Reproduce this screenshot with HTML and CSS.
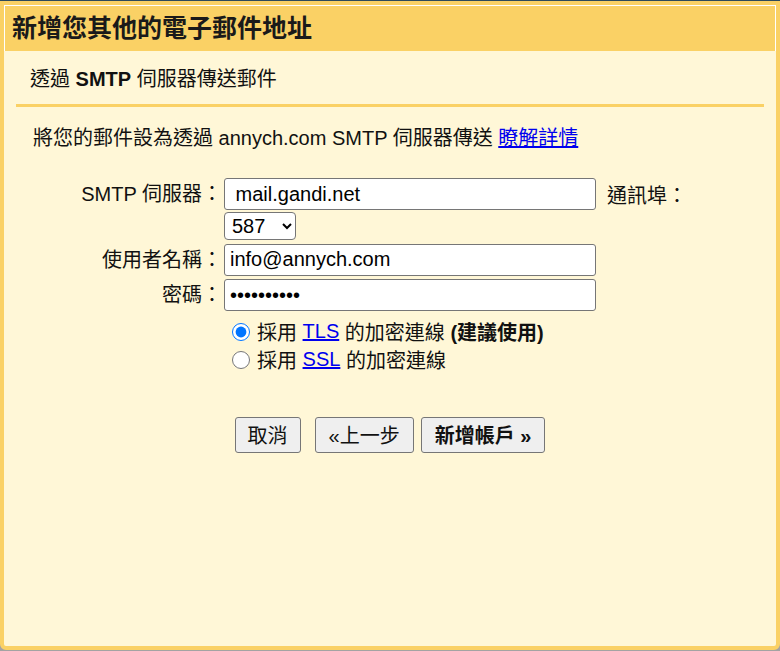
FILE: index.html
```
<!DOCTYPE html>
<html lang="zh-Hant">
<head>
    <meta charset="UTF-8">
    <meta name="viewport" content="width=device-width, initial-scale=1.0">
    <title>新增您其他的電子郵件地址</title>
    <link rel="stylesheet" href="styles.css">
</head>
<body>
<div class="dialog">
    <div class="dialog-head">新增您其他的電子郵件地址</div>

    <div class="section">
        <div class="section-title">透過 <b>SMTP</b> 伺服器傳送郵件</div>

        <p class="intro">將您的郵件設為透過 annych.com SMTP 伺服器傳送 <a href="#">瞭解詳情</a></p>

        <div class="form">
            <label class="field-label" for="smtpServer">SMTP 伺服器：</label>
            <div class="field">
                <div class="field-line">
                    <input id="smtpServer" class="text-input" type="text" value=" mail.gandi.net">
                    <span class="port-label">通訊埠：</span>
                </div>
                <select class="port-select">
                    <option selected>587</option>
                    <option>465</option>
                    <option>25</option>
                </select>
            </div>

            <label class="field-label" for="userName">使用者名稱：</label>
            <div class="field">
                <input id="userName" class="text-input" type="text" value="info@annych.com">
            </div>

            <label class="field-label" for="password">密碼：</label>
            <div class="field">
                <input id="password" class="text-input" type="password" value="0123456789">
            </div>

            <div></div>
            <div class="options">
                <label class="option"><input type="radio" name="security" checked>採用&nbsp;<a href="#">TLS</a>&nbsp;的加密連線&nbsp;<b>(建議使用)</b></label>
                <label class="option"><input type="radio" name="security">採用&nbsp;<a href="#">SSL</a>&nbsp;的加密連線</label>
            </div>
        </div>

        <div class="actions">
            <button class="btn btn-cancel">取消</button>
            <button class="btn btn-back">«上一步</button>
            <button class="btn btn-next"><b>新增帳戶 »</b></button>
        </div>
    </div>
</div>
</body>
</html>
```

FILE: styles.css
```
html,
body {
    margin: 0;
    padding: 0;
    background: #a3a3a3;
}

body {
    border-top: 1px solid #2c4a5d;
    font-family: "Liberation Sans", "Noto Sans CJK TC", sans-serif;
    font-size: 20px;
    color: #111;
}

.dialog {
    height: 649px;
    box-sizing: border-box;
    border: 4px solid #fad165;
    border-radius: 0 0 6px 6px;
    background: #fff7d7;
}

.dialog-head {
    height: 45px;
    line-height: 45px;
    padding-left: 7px;
    background: #fad165;
    border: 1px solid #fff;
    border-bottom: 0;
    font-size: 25px;
    font-weight: bold;
    color: #1a1a1a;
}

.section {
    margin: 0 12px;
}

.section-title {
    padding: 3px 0 0 14px;
    line-height: 50px;
    border-bottom: 3px solid #fad165;
}

.intro {
    margin: 19px 0 0;
    padding-left: 17px;
    line-height: 24px;
}

a {
    color: #0000ee;
}

/* label column + field column */
.form {
    display: grid;
    grid-template-columns: 206px 1fr;
    column-gap: 2px;
    row-gap: 3.5px;
    margin-top: 28px;
}

.field-label {
    text-align: right;
    line-height: 32px;
    align-self: start;
}

.field-line {
    display: flex;
    align-items: center;
}

.text-input {
    width: 372px;
    height: 32px;
    box-sizing: border-box;
    padding: 0 5px;
    border: 1px solid #767676;
    border-radius: 3px;
    background: #fff;
    font: inherit;
    color: #000;
}

.port-label {
    margin-left: 11px;
}

.port-select {
    display: block;
    width: 72px;
    height: 28px;
    margin-top: 2px;
    padding: 0 3px;
    border: 1px solid #767676;
    border-radius: 4px;
    background: #fff;
    font: inherit;
    color: #000;
}

.options {
    margin-top: 3px;
}

.option {
    display: flex;
    align-items: center;
    height: 28px;
}

.option input {
    width: 18px;
    height: 18px;
    margin: 0 7px 0 8px;
}

.actions {
    display: flex;
    justify-content: center;
    margin-top: 43px;
}

.btn {
    height: 36px;
    padding: 0 13px;
    border: 1px solid #767676;
    border-radius: 3px;
    background: #efefef;
    font: inherit;
    color: #111;
}

.btn-cancel {
    padding: 0 12px;
    margin-right: 14px;
}

.btn-back {
    margin-right: 7px;
}
```
